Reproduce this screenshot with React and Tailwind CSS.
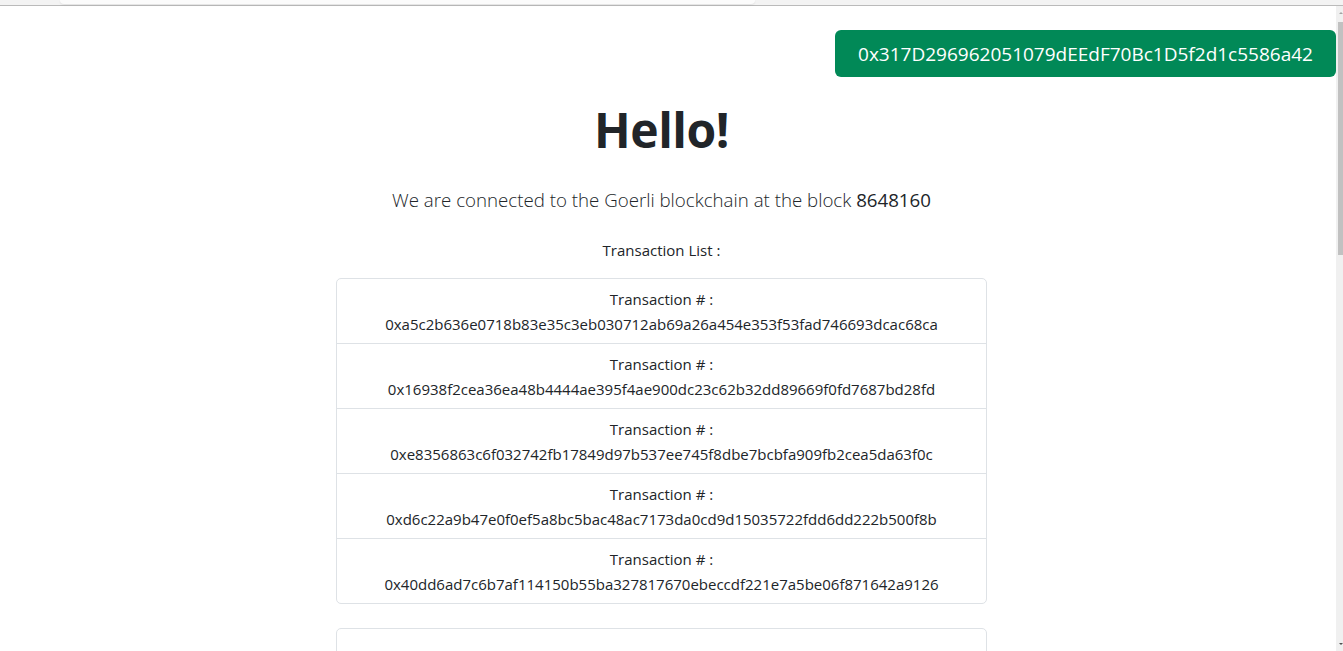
import React from "react";

const txs = [
  "0xa5c2b636e0718b83e35c3eb030712ab69a26a454e353f53fad746693dcac68ca",
  "0x16938f2cea36ea48b4444ae395f4ae900dc23c62b32dd89669f0fd7687bd28fd",
  "0xe8356863c6f032742fb17849d97b537ee745f8dbe7bcbfa909fb2cea5da63f0c",
  "0xd6c22a9b47e0f0ef5a8bc5bac48ac7173da0cd9d15035722fdd6dd222b500f8b",
  "0x40dd6ad7c6b7af114150b55ba327817670ebeccdf221e7a5be06f871642a9126",
];

export default function App() {
  return (
    <div
      className="w-[1343px] h-[651px] overflow-hidden bg-white flex flex-col text-[#212529]"
      style={{ fontFamily: '"Open Sans", "Noto Sans", sans-serif' }}
    >
      {/* top browser strip */}
      <div className="h-[6px] shrink-0 bg-[#f3f3f3] border-b border-[#bababa] relative">
        <div className="absolute left-[60px] w-[695px] top-0 h-[4px] bg-[#fbfbfb] rounded-b-[6px] shadow-[0_1px_2px_rgba(0,0,0,0.08)]" />
      </div>
      <div className="flex flex-1 min-h-0">
        {/* page content */}
        <div className="flex-1 flex flex-col overflow-hidden">
          <div className="flex justify-end mt-[24px]">
            <div className="h-[47px] w-[501px] rounded-[6px] bg-[#018957] text-white text-[19px] pt-[1px] flex items-center justify-center">
              0x317D296962051079dEEdF70Bc1D5f2d1c5586a42
            </div>
          </div>
          <div className="flex flex-col items-center mr-[12px] ml-[-1px]">
            <h1 className="mt-[23px] text-[48px] font-bold leading-[60px] tracking-[-0.5px] text-[#212529]">
              Hello!
            </h1>
            <p className="mt-[26px] text-[18.7px] leading-[28px] font-light text-[#212529]">
              We are connected to the Goerli blockchain at the block{" "}
              <span className="font-normal">8648160</span>
            </p>
            <p className="mt-[25px] text-[15px] leading-[22px]">Transaction List :</p>
            <div className="mt-[17px] w-[651px] border border-[#dee2e6] rounded-[5px] divide-y divide-[#dee2e6]">
              {txs.map((t) => (
                <div key={t} className="pt-[8px] pb-[6px] text-center text-[15px] leading-[25px]">
                  <div>Transaction # :</div>
                  <div>{t}</div>
                </div>
              ))}
            </div>
            <div className="mt-[24px] w-[651px] border border-[#dee2e6] rounded-[5px]">
              <div className="pt-[16px] pb-[7px] text-center text-[15px] leading-[25px]">
                <div>Transaction # :</div>
                <div>0x6b2f0e3c1a9d8f7e5b4c3a2d1e0f9a8b7c6d5e4f3a2b1c0d9e8f7a6b5c4d3e2f</div>
              </div>
            </div>
          </div>
        </div>
        {/* scrollbar */}
        <div className="w-[7px] shrink-0 bg-[#f0f0f0] relative">
          <div className="absolute left-[2px] right-0 top-[16px] h-[233px] bg-[#c1c1c1]" />
          <div className="absolute left-[3px] top-[6px] w-0 h-0 border-l-[2px] border-r-[2px] border-b-[2px] border-l-transparent border-r-transparent border-b-[#a3a3a3]" />
          <div className="absolute left-[3px] bottom-[6px] w-0 h-0 border-l-[2px] border-r-[2px] border-t-[2px] border-l-transparent border-r-transparent border-t-[#505050]" />
        </div>
      </div>
    </div>
  );
}
